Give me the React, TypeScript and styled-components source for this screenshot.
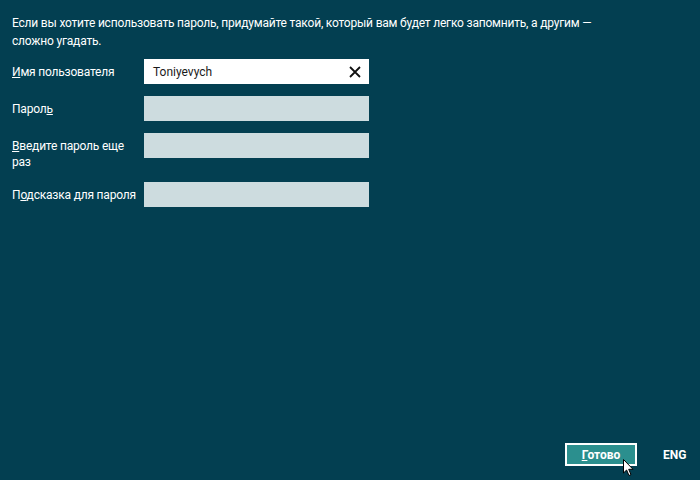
import styled, { createGlobalStyle } from "styled-components";

const Global = createGlobalStyle`
  html, body {
    margin: 0;
    padding: 0;
    background: #033f51;
  }
  body {
    font-family: Roboto, "Liberation Sans", sans-serif;
    color: #ffffff;
  }
`;

const Page = styled.div`
  width: 700px;
  height: 480px;
  background: #033f51;
  display: flex;
  flex-direction: column;
  overflow: hidden;
`;

const Intro = styled.p`
  margin: 0;
  padding: 14px 0 0 12px;
  font-size: 12px;
  letter-spacing: -0.2px;
  line-height: 18px;
  white-space: nowrap;
  color: #ffffff;
`;

const Form = styled.div`
  display: flex;
  flex-direction: column;
  gap: 12px;
  padding: 9px 0 0 12px;
`;

const Row = styled.div`
  display: flex;
  align-items: flex-start;
`;

const Label = styled.label`
  width: 132px;
  padding-top: 5px;
  font-size: 12px;
  letter-spacing: -0.2px;
  line-height: 16px;
  white-space: nowrap;
  color: #ffffff;
`;

const Field = styled.div<{ $active?: boolean }>`
  width: 225px;
  height: 25px;
  box-sizing: border-box;
  background: ${(p) => (p.$active ? "#ffffff" : "#cddcdf")};
  display: flex;
  align-items: center;
  justify-content: space-between;
  padding: 0 8px 0 9px;
  font-size: 12px;
  color: #1a1a1a;
`;

const Clear = styled.span`
  display: flex;
  align-items: center;
`;

const Spacer = styled.div`
  flex: 1;
`;

const Footer = styled.div`
  display: flex;
  align-items: center;
  justify-content: flex-end;
  gap: 26px;
  padding: 0 10px 14px 0;
`;

const Button = styled.button`
  width: 72px;
  height: 23px;
  box-sizing: border-box;
  border: 2px solid #ffffff;
  background: #2b8f8e;
  color: #ffffff;
  font-family: Roboto, "Liberation Sans", sans-serif;
  font-size: 12px;
  font-weight: 700;
  padding: 0;
  position: relative;
`;

const Lang = styled.span`
  font-size: 12px;
  font-weight: 700;
  color: #ffffff;
  width: 27px;
`;

const Cursor = styled.svg`
  position: absolute;
  left: 56px;
  top: 14px;
`;

export default function App() {
  return (
    <Page>
      <Global />
      <Intro>
        Если вы хотите использовать пароль, придумайте такой, который вам будет легко запомнить, а другим —
        <br />
        сложно угадать.
      </Intro>
      <Form>
        <Row>
          <Label><u>И</u>мя пользователя</Label>
          <Field $active>
            Toniyevych
            <Clear>
              <svg width="12" height="12" viewBox="0 0 12 12">
                <path d="M1 1 L11 11 M11 1 L1 11" stroke="#111" strokeWidth="1.8" />
              </svg>
            </Clear>
          </Field>
        </Row>
        <Row>
          <Label>Парол<u>ь</u></Label>
          <Field />
        </Row>
        <Row>
          <Label><u>В</u>ведите пароль еще<br />раз</Label>
          <Field />
        </Row>
        <Row>
          <Label>П<u>о</u>дсказка для пароля</Label>
          <Field />
        </Row>
      </Form>
      <Spacer />
      <Footer>
        <Button>
          <u>Г</u>отово
          <Cursor width="12" height="18" viewBox="0 0 12 18">
            <path d="M0.5 0.5 L0.5 14 L3.6 11 L6 16.5 L8 15.6 L5.7 10.3 L10 10.3 Z" fill="#ffffff" stroke="#000" strokeWidth="1" />
          </Cursor>
        </Button>
        <Lang>ENG</Lang>
      </Footer>
    </Page>
  );
}
